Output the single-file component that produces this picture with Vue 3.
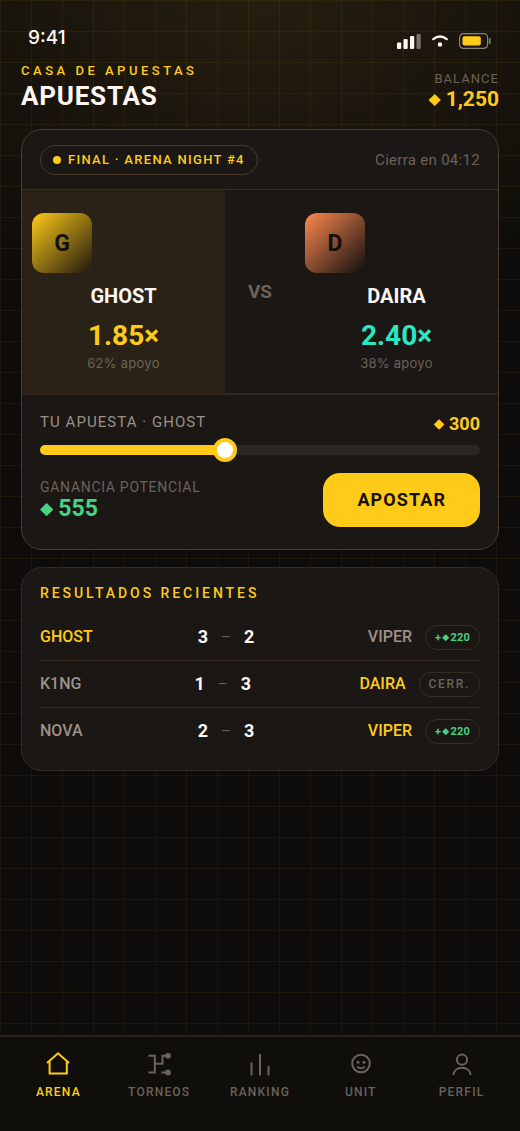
<script setup>
import { computed, ref } from 'vue'

const fighters = [
  { id: 'ghost', name: 'GHOST', initial: 'G', odds: 1.85, support: 62 },
  { id: 'daira', name: 'DAIRA', initial: 'D', odds: 2.4, support: 38 },
]

const results = [
  { home: 'GHOST', away: 'VIPER', homeScore: 3, awayScore: 2, won: true },
  { home: 'K1NG', away: 'DAIRA', homeScore: 1, awayScore: 3, won: false },
  { home: 'NOVA', away: 'VIPER', homeScore: 2, awayScore: 3, won: true },
]

const tabs = ['ARENA', 'TORNEOS', 'RANKING', 'UNIT', 'PERFIL']

const maxBet = 720
const bet = ref(300)
const picked = ref('ghost')
const activeTab = ref('ARENA')

const fighter = computed(() => fighters.find((f) => f.id === picked.value))
const payout = computed(() => Math.round(bet.value * fighter.value.odds))
const fill = computed(() => bet.value / maxBet)
</script>

<template>
  <div class="screen">
    <div class="status">
      <span class="clock">9:41</span>
      <div class="status-icons">
        <svg width="24" height="16" viewBox="0 0 24 16" aria-hidden="true">
          <g fill="#fff7f0">
            <rect x="0" y="9.5" width="4.2" height="6.5" rx="1" />
            <rect x="6.5" y="6" width="4.2" height="10" rx="1" />
            <rect x="13" y="3" width="4.2" height="13" rx="1" />
            <rect x="19.5" y="1" width="4.2" height="15" rx="1" opacity=".4" />
          </g>
        </svg>
        <svg width="16" height="12" viewBox="0 0 16 12" aria-hidden="true">
          <path d="M1.3 4.1Q8-1.3 14.7 4.1" fill="none" stroke="#fff7f0" stroke-width="2.4" stroke-linecap="round" />
          <circle cx="8" cy="9.5" r="2.2" fill="#fff7f0" />
        </svg>
        <svg width="32" height="16" viewBox="0 0 32 16" aria-hidden="true">
          <rect x=".6" y=".6" width="28" height="14.8" rx="4" fill="none" stroke="#87827c" stroke-width="1.2" />
          <rect x="3.5" y="3.2" width="18.3" height="9.4" rx="2" fill="#ffcb18" />
          <rect x="29.8" y="5" width="2" height="6" rx="1" fill="#77726c" />
        </svg>
      </div>
    </div>

    <header class="header">
      <div>
        <p class="eyebrow">CASA DE APUESTAS</p>
        <h1 class="title">APUESTAS</h1>
      </div>
      <div class="balance">
        <p class="balance-label">BALANCE</p>
        <p class="balance-value"><span class="gem">◆</span>1,250</p>
      </div>
    </header>

    <main class="content">
      <section class="card">
        <div class="card-head">
          <span class="badge"><i class="dot"></i>FINAL · ARENA NIGHT #4</span>
          <span class="closing">Cierra en 04:12</span>
        </div>

        <div class="versus">
          <template v-for="(f, i) in fighters" :key="f.id">
            <span v-if="i" class="vs">VS</span>
            <button
              type="button"
              class="fighter"
              :class="[f.id, { selected: picked === f.id }]"
              :aria-pressed="picked === f.id"
              @click="picked = f.id"
            >
              <span class="avatar">{{ f.initial }}</span>
              <span class="name">{{ f.name }}</span>
              <span class="odds">{{ f.odds.toFixed(2) }}×</span>
              <span class="support">{{ f.support }}% apoyo</span>
            </button>
          </template>
        </div>

        <div class="bet">
          <div class="bet-row bet-top">
            <label class="bet-label" for="amount">TU APUESTA · {{ fighter.name }}</label>
            <span class="bet-amount"><span class="gem">◆</span>{{ bet }}</span>
          </div>
          <input
            id="amount"
            v-model.number="bet"
            class="slider"
            type="range"
            min="0"
            :max="maxBet"
            :style="{ '--fill': fill }"
          />
          <div class="bet-row">
            <div>
              <p class="payout-label">GANANCIA POTENCIAL</p>
              <p class="payout"><span class="gem">◆</span>{{ payout }}</p>
            </div>
            <button type="button" class="submit">APOSTAR</button>
          </div>
        </div>
      </section>

      <section class="card results">
        <h2 class="results-title">RESULTADOS RECIENTES</h2>
        <ul class="list">
          <li v-for="(r, i) in results" :key="i" class="result">
            <span class="team" :class="{ winner: r.homeScore > r.awayScore }">{{ r.home }}</span>
            <span class="score"><b>{{ r.homeScore }}</b><span class="dash">–</span><b>{{ r.awayScore }}</b></span>
            <span class="team away" :class="{ winner: r.awayScore > r.homeScore }">{{ r.away }}</span>
            <span v-if="r.won" class="tag won">+<span class="tag-gem">◆</span>220</span>
            <span v-else class="tag">CERR.</span>
          </li>
        </ul>
      </section>
    </main>

    <nav class="tabs">
      <button
        v-for="t in tabs"
        :key="t"
        type="button"
        class="tab"
        :class="{ active: activeTab === t }"
        @click="activeTab = t"
      >
        <svg class="tab-icon" width="26" height="26" viewBox="0 0 26 26" aria-hidden="true">
          <path v-if="t === 'ARENA'" d="M2 12 13 2.3 24 12M4.6 10.2V22.5H21.8V10.2" />
          <template v-else-if="t === 'TORNEOS'">
            <path d="M2.5 4.8H8.8V21.5H2.5M8.8 12.7H16.5V4.8H21M15.5 21.5H21" />
            <circle class="solid" cx="22" cy="4.8" r="2.9" />
            <circle class="solid" cx="22" cy="21.5" r="2.9" />
          </template>
          <path v-else-if="t === 'RANKING'" d="M4.5 11.5V24.5M13 3V24.5M21.5 15V24.5" />
          <template v-else-if="t === 'UNIT'">
            <circle cx="13" cy="12.5" r="8.8" />
            <path d="M9.2 15.7Q13 18.8 16.8 15.7" />
            <circle class="solid" cx="10" cy="11.3" r="1.5" />
            <circle class="solid" cx="16" cy="11.3" r="1.5" />
          </template>
          <template v-else>
            <circle cx="13" cy="8.7" r="5.1" />
            <path d="M4.2 24C5.7 14.3 20.3 14.3 21.8 24" />
          </template>
        </svg>
        <span>{{ t }}</span>
      </button>
    </nav>
  </div>
</template>

<style>
body {
  margin: 0;
  background: #0d0c0a;
}
</style>

<style scoped>
.screen {
  --gold: #ffcb18;
  --line: #3a2e22;
  --muted: #6b625a;
  --soft: #9c9187;
  --panel: #1b1714;
  box-sizing: border-box;
  min-height: 100vh;
  display: flex;
  flex-direction: column;
  color: #fff7f3;
  font-family: Roboto, "Liberation Sans", sans-serif;
  background:
    linear-gradient(to right, rgba(255, 203, 24, 0.06) 1px, transparent 1px) 0 0 / 31px 31px,
    linear-gradient(to bottom, rgba(255, 203, 24, 0.06) 1px, transparent 1px) 0 0 / 31px 31px,
    radial-gradient(ellipse 480px 320px at 50% 0, rgba(255, 185, 60, 0.1), transparent),
    #0d0c0a;
}

p,
h1,
h2,
ul {
  margin: 0;
  padding: 0;
}

button {
  font-family: inherit;
  color: inherit;
  border: 0;
  cursor: pointer;
}

.status {
  display: flex;
  justify-content: space-between;
  align-items: center;
  padding: 26px 29px 0 28px;
}

.clock {
  font: 500 19px/24px Inter, sans-serif;
}

.status-icons {
  display: flex;
  align-items: center;
  gap: 11px;
  padding-top: 6px;
}

.header {
  display: flex;
  justify-content: space-between;
  align-items: flex-end;
  padding: 12px 21px 0;
}

.eyebrow {
  font-size: 13px;
  line-height: 18px;
  font-weight: 500;
  letter-spacing: 0.27em;
  color: var(--gold);
}

.title {
  font-size: 26px;
  line-height: 33px;
  font-weight: 700;
  letter-spacing: 0.03em;
}

.balance {
  padding-bottom: 2px;
  text-align: right;
}

.balance-label {
  font-size: 13px;
  line-height: 18px;
  letter-spacing: 0.08em;
  color: var(--muted);
}

.balance-value {
  font-size: 21px;
  line-height: 23px;
  font-weight: 700;
  color: var(--gold);
}

.gem {
  font-family: "DejaVu Sans", sans-serif;
  font-weight: 400;
  font-size: 0.75em;
  line-height: 1;
  margin-right: 5px;
  vertical-align: 2px;
}

.content {
  display: flex;
  flex-direction: column;
  gap: 17px;
  padding: 16px 21px 24px;
}

.card {
  border: 1px solid #4a3a2b;
  border-radius: 21px;
  background: var(--panel);
  overflow: hidden;
}

.card-head {
  display: flex;
  justify-content: space-between;
  align-items: center;
  padding: 15px 18px 14px;
  border-bottom: 1px solid var(--line);
}

.badge {
  display: flex;
  align-items: center;
  gap: 7px;
  padding: 5px 12px;
  border: 1px solid #4a3a2a;
  border-radius: 15px;
  font-size: 13px;
  line-height: 18px;
  font-weight: 500;
  letter-spacing: 0.1em;
  color: var(--gold);
}

.dot {
  width: 8px;
  height: 8px;
  border-radius: 50%;
  background: var(--gold);
}

.closing {
  font-size: 15px;
  line-height: 20px;
  letter-spacing: 0.02em;
  color: var(--muted);
}

.versus {
  display: grid;
  grid-template-columns: 1fr 70px 1fr;
  align-items: stretch;
  border-bottom: 2px solid #2f261e;
}

.fighter {
  display: flex;
  flex-direction: column;
  align-items: center;
  padding: 23px 10px 21px;
  background: transparent;
}

.fighter.selected {
  background: #2a2216;
}

.avatar {
  align-self: flex-start;
  display: grid;
  place-items: center;
  width: 60px;
  height: 60px;
  border-radius: 12px;
  font-size: 23px;
  font-weight: 700;
  color: #14100c;
}

.ghost .avatar {
  background: linear-gradient(135deg, #ffcb18, #2a2010 95%);
}

.daira .avatar {
  background: linear-gradient(135deg, #ff8950, #1b1512 95%);
}

.name {
  margin-top: 11px;
  font-size: 20px;
  line-height: 24px;
  font-weight: 700;
}

.odds {
  margin-top: 12px;
  font-size: 28px;
  line-height: 32px;
  font-weight: 700;
  color: #2ce5c3;
}

.ghost .odds {
  color: var(--gold);
}

.support {
  margin-top: 2px;
  font: 400 13px/18px Inter, sans-serif;
  letter-spacing: 0.02em;
  color: var(--muted);
}

.vs {
  align-self: center;
  text-align: center;
  font-size: 19px;
  line-height: 24px;
  font-weight: 700;
  color: var(--muted);
}

.bet {
  padding: 17px 18px 22px;
}

.bet-row {
  display: flex;
  justify-content: space-between;
  align-items: center;
}

.bet-top {
  align-items: flex-start;
}

.bet-label {
  font-size: 15px;
  line-height: 20px;
  letter-spacing: 0.07em;
  color: var(--soft);
}

.bet-amount {
  font-size: 18px;
  line-height: 24px;
  font-weight: 700;
  color: var(--gold);
}

.slider {
  appearance: none;
  display: block;
  width: 100%;
  height: 24px;
  margin: 2px 0 11px;
  background: transparent;
  cursor: pointer;
}

.slider::-webkit-slider-runnable-track {
  height: 10px;
  border-radius: 5px;
  background: linear-gradient(
    to right,
    var(--gold) calc(12px + (100% - 24px) * var(--fill)),
    #2b2620 calc(12px + (100% - 24px) * var(--fill))
  );
}

.slider::-webkit-slider-thumb {
  appearance: none;
  box-sizing: border-box;
  width: 24px;
  height: 24px;
  margin-top: -7px;
  border: 4px solid var(--gold);
  border-radius: 50%;
  background: #fff;
}

.payout-label {
  font-size: 14px;
  line-height: 18px;
  letter-spacing: 0.05em;
  color: var(--muted);
}

.payout {
  font-size: 23px;
  line-height: 26px;
  font-weight: 700;
  color: #45d483;
}

.submit {
  padding: 16px 34px;
  border-radius: 17px;
  background: var(--gold);
  color: #171104;
  font-size: 18px;
  line-height: 22px;
  font-weight: 700;
  letter-spacing: 0.06em;
}

.results {
  border-color: #352a21;
  padding: 15px 18px 16px;
}

.results-title {
  font-size: 14px;
  line-height: 20px;
  font-weight: 500;
  letter-spacing: 0.21em;
  color: var(--gold);
}

.list {
  margin-top: 11px;
  list-style: none;
}

.result {
  display: flex;
  align-items: center;
  height: 46px;
}

.result + .result {
  border-top: 1px solid var(--line);
}

.team {
  flex: 1;
  font-size: 16px;
  line-height: 22px;
  font-weight: 500;
  color: var(--soft);
}

.team.away {
  text-align: right;
}

.team.winner {
  color: var(--gold);
}

.score {
  display: flex;
  gap: 13px;
  font-size: 18px;
  line-height: 22px;
}

.dash {
  font-size: 15px;
  color: var(--muted);
}

.tag {
  margin-left: 13px;
  padding: 3px 9px;
  border: 1px solid var(--line);
  border-radius: 12px;
  font-size: 12px;
  line-height: 17px;
  font-weight: 500;
  letter-spacing: 0.14em;
  color: var(--muted);
}

.tag.won {
  font-size: 11px;
  letter-spacing: 0.02em;
  font-weight: 700;
  color: #45d483;
}

.tag-gem {
  margin: 0 1px;
  font-family: "DejaVu Sans", sans-serif;
  font-size: 9px;
  line-height: 1;
  vertical-align: 1px;
}

.tabs {
  display: grid;
  grid-template-columns: repeat(5, 1fr);
  margin-top: auto;
  padding: 14px 8px 30px;
  border-top: 2px solid #2a211b;
  background: #0f0e0b;
}

.tab {
  display: flex;
  flex-direction: column;
  align-items: center;
  gap: 6px;
  padding: 0;
  background: transparent;
  color: var(--muted);
  font-size: 12px;
  line-height: 18px;
  font-weight: 500;
  letter-spacing: 0.1em;
}

.tab.active {
  color: var(--gold);
}

.tab-icon {
  fill: none;
  stroke: currentColor;
  stroke-width: 2;
}

.solid {
  fill: currentColor;
  stroke: none;
}
</style>
